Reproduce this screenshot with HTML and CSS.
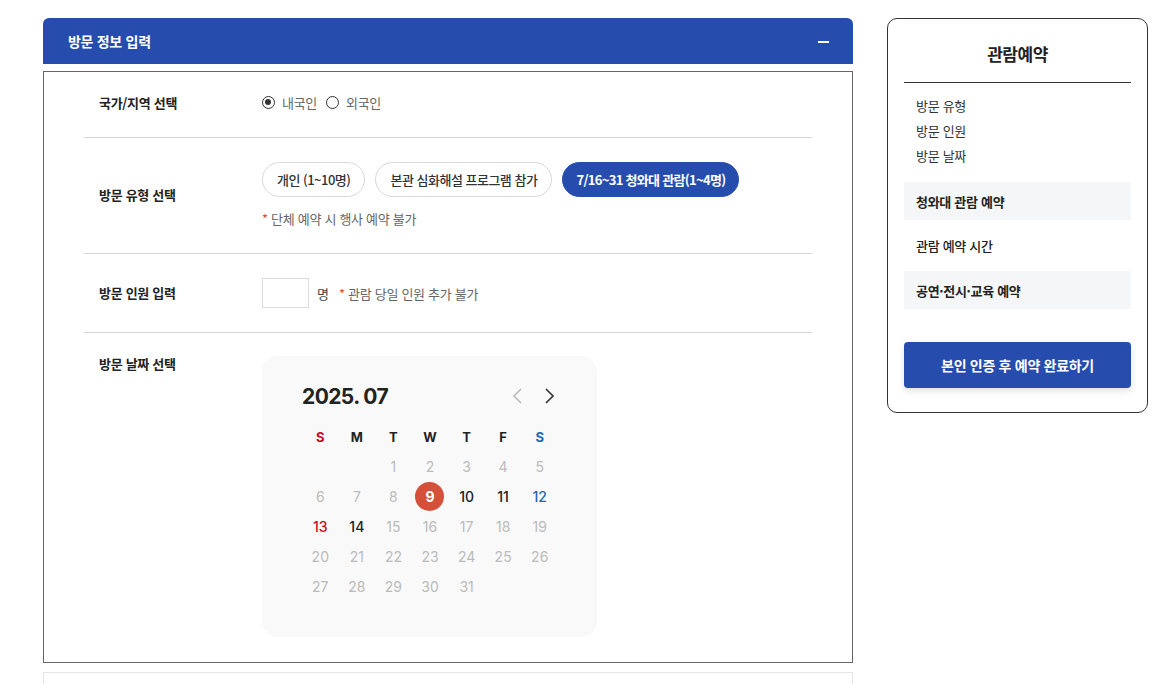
FILE: index.html
```html
<!DOCTYPE html>
<html lang="ko">
<head>
<meta charset="utf-8">
<title>관람예약</title>
<link rel="stylesheet" href="styles.css">
</head>
<body>
<div class="page">
  <main class="main">
    <div class="sec-head">
      <h2 class="sec-title">방문 정보 입력</h2>
      <span class="minus"></span>
    </div>
    <div class="panel">
      <div class="row">
        <div class="label">국가/지역 선택</div>
        <div class="value radios">
          <label class="radio"><span class="dot on"></span>내국인</label>
          <label class="radio"><span class="dot"></span>외국인</label>
        </div>
      </div>
      <div class="row row-type">
        <div class="label">방문 유형 선택</div>
        <div class="value">
          <div class="chips">
            <button class="chip">개인 (1~10명)</button>
            <button class="chip">본관 심화해설 프로그램 참가</button>
            <button class="chip active">7/16~31 청와대 관람(1~4명)</button>
          </div>
          <p class="note"><span class="ast">*</span> 단체 예약 시 행사 예약 불가</p>
        </div>
      </div>
      <div class="row row-count">
        <div class="label">방문 인원 입력</div>
        <div class="value count">
          <span class="num-input"></span>
          <span class="unit">명</span>
          <span class="note-inline"><span class="ast">*</span> 관람 당일 인원 추가 불가</span>
        </div>
      </div>
      <div class="row row-date">
        <div class="label label-top">방문 날짜 선택</div>
        <div class="value">
          <div class="cal">
            <div class="cal-head">
              <span class="cal-title">2025. 07</span>
              <div class="cal-nav">
                <svg class="arr prev" width="14" height="18" viewBox="0 0 14 18"><path d="M10 2 L3 9 L10 16" fill="none" stroke="currentColor" stroke-width="1.6"/></svg>
                <svg class="arr next" width="14" height="18" viewBox="0 0 14 18"><path d="M4 2 L11 9 L4 16" fill="none" stroke="currentColor" stroke-width="1.6"/></svg>
              </div>
            </div>
            <div class="grid">
              <span class="wd sun">S</span><span class="wd">M</span><span class="wd">T</span><span class="wd">W</span><span class="wd">T</span><span class="wd">F</span><span class="wd sat">S</span>
              <span></span><span></span><span class="d">1</span><span class="d">2</span><span class="d">3</span><span class="d">4</span><span class="d">5</span>
              <span class="d">6</span><span class="d">7</span><span class="d">8</span><span class="d today"><i>9</i></span><span class="d en">10</span><span class="d en">11</span><span class="d en sat">12</span>
              <span class="d en sun">13</span><span class="d en">14</span><span class="d">15</span><span class="d">16</span><span class="d">17</span><span class="d">18</span><span class="d">19</span>
              <span class="d">20</span><span class="d">21</span><span class="d">22</span><span class="d">23</span><span class="d">24</span><span class="d">25</span><span class="d">26</span>
              <span class="d">27</span><span class="d">28</span><span class="d">29</span><span class="d">30</span><span class="d">31</span><span></span><span></span>
            </div>
          </div>
        </div>
      </div>
    </div>
    <div class="panel2"></div>
  </main>
  <aside class="side">
    <h3 class="side-title">관람예약</h3>
    <ul class="side-list">
      <li>방문 유형</li>
      <li>방문 인원</li>
      <li>방문 날짜</li>
    </ul>
    <div class="side-box">청와대 관람 예약</div>
    <div class="side-item">관람 예약 시간</div>
    <div class="side-box">공연·전시·교육 예약</div>
    <button class="side-btn">본인 인증 후 예약 완료하기</button>
  </aside>
</div>
</body>
</html>
```

FILE: styles.css
```css
* { box-sizing: border-box; }
html, body { margin: 0; padding: 0; background: #fff; }
body {
  font-family: "Noto Sans CJK KR", "Noto Sans", sans-serif;
  color: #222;
  font-size: 13px;
  overflow: hidden;
}
.page {
  display: flex;
  align-items: flex-start;
  gap: 34px;
  padding: 18px 0 0 43px;
}
.main { width: 810px; flex: none; }
.sec-head {
  height: 46px;
  background: #264dae;
  border-radius: 6px 6px 0 0;
  display: flex;
  align-items: center;
  justify-content: space-between;
  padding: 0 24px 0 25px;
}
.sec-title {
  margin: 0;
  color: #fff;
  font-size: 14px;
  font-weight: 700;
  line-height: 20px;
  letter-spacing: -0.3px;
}
.minus {
  width: 11px;
  height: 2px;
  background: #fff;
  margin-top: 1px;
}
.panel {
  margin-top: 7px;
  border: 1px solid #666;
  padding: 0 40px;
  height: 592px;
}
.row {
  display: flex;
  align-items: center;
  padding: 23px 0 24px;
  border-bottom: 1px solid #d6d6d6;
}
.row:first-child { padding: 21px 0 25px; }
.row-type { padding: 24px 0 25px; }
.row-count { padding: 24px 0 24px; }
.row-date { border-bottom: none; align-items: flex-start; }
.label {
  width: 178px;
  flex: none;
  padding-left: 15px;
  font-weight: 700;
  font-size: 13px;
  line-height: 18px;
  letter-spacing: -0.3px;
  color: #222;
}
.label-top { margin-top: -1px; }
.value { flex: 1; }
.radios { display: flex; gap: 9px; line-height: 19px; }
.radio {
  display: flex;
  align-items: center;
  gap: 7px;
  color: #666;
  font-size: 13px;
  letter-spacing: -0.3px;
}
.dot {
  width: 13px;
  height: 13px;
  border: 1.3px solid #333;
  border-radius: 50%;
  position: relative;
}
.dot.on::after {
  content: "";
  position: absolute;
  left: 2.2px; top: 2.2px;
  width: 6px; height: 6px;
  border-radius: 50%;
  background: #333;
}
.chips { display: flex; gap: 10px; }
.chip {
  height: 35px;
  padding: 0 14px;
  border: 1px solid #d9d9d9;
  border-radius: 18px;
  background: #fff;
  font-family: inherit;
  font-size: 13px;
  font-weight: 500;
  color: #333;
  letter-spacing: -0.5px;
  cursor: pointer;
}
.chip.active {
  background: #264dae;
  border-color: #264dae;
  color: #fff;
  font-weight: 600;
  padding: 0 13px;
  letter-spacing: -0.7px;
}
.note {
  margin: 13px 0 0;
  color: #666;
  font-size: 13px;
  line-height: 18px;
  letter-spacing: -0.3px;
}
.ast { color: #d4503a; }
.count { display: flex; align-items: center; }
.num-input {
  width: 47px;
  height: 30px;
  border: 1px solid #dcdcdc;
  background: #fff;
}
.unit { margin-left: 8px; color: #444; font-size: 13px; }
.note-inline { margin-left: 10px; color: #666; font-size: 13px; letter-spacing: -0.3px; }
.cal {
  width: 335px;
  height: 281px;
  background: #f9f9f9;
  border-radius: 16px;
  padding: 26px 39px 0 40px;
  font-family: Inter, "Noto Sans", sans-serif;
}
.cal-head {
  display: flex;
  justify-content: space-between;
  align-items: center;
  height: 28px;
}
.cal-title {
  font-size: 21px;
  font-weight: 700;
  color: #222;
  letter-spacing: -0.6px;
}
.cal-nav { display: flex; gap: 17px; margin-right: 2px; }
.arr { display: block; }
.prev { color: #bbb; }
.next { color: #333; }
.grid {
  margin-top: 12px;
  display: grid;
  grid-template-columns: repeat(7, 1fr);
  grid-template-rows: 29px;
  grid-auto-rows: 30px;
  width: 256px;
}
.grid span {
  display: flex;
  align-items: center;
  justify-content: center;
  font-size: 14px;
}
.wd { font-weight: 700; color: #222; font-size: 13px !important; }
.wd.sun { color: #c0102a; }
.wd.sat { color: #1a6ab5; }
.d { color: #bbb; font-weight: 400; }
.d.en { color: #222; font-weight: 500; }
.d.en.sat { color: #1a6ab5; }
.d.en.sun { color: #c0102a; }
.d.today i {
  font-style: normal;
  width: 29px;
  height: 29px;
  border-radius: 50%;
  background: #d4503a;
  color: #fff;
  font-weight: 700;
  display: flex;
  align-items: center;
  justify-content: center;
}
.panel2 {
  margin-top: 9px;
  height: 60px;
  border: 1px solid #e6e6e6;
}
.side {
  width: 261px;
  flex: none;
  border: 1px solid #333;
  border-radius: 10px;
  padding: 0 16px 24px 16px;
}
.side-title {
  margin: 0;
  padding: 22px 0 16px;
  text-align: center;
  font-size: 17px;
  line-height: 25px;
  font-weight: 700;
  color: #222;
  letter-spacing: -0.5px;
  border-bottom: 1px solid #333;
}
.side-list {
  list-style: none;
  margin: 0;
  padding: 10px 12px 0;
}
.side-list li {
  line-height: 25px;
  font-size: 13px;
  color: #333;
  letter-spacing: -0.3px;
}
.side-box {
  margin-top: 14px;
  background: #f5f6f8;
  height: 38px;
  display: flex;
  align-items: center;
  padding: 0 12px;
  font-weight: 700;
  font-size: 13px;
  color: #222;
  letter-spacing: -0.3px;
}
.side-item + .side-box { margin-top: 0; }
.side-item {
  height: 51px;
  display: flex;
  align-items: center;
  padding: 0 12px;
  font-size: 13px;
  font-weight: 500;
  color: #222;
  letter-spacing: -0.3px;
}
.side-btn {
  margin-top: 33px;
  width: 100%;
  height: 46px;
  border: none;
  border-radius: 4px;
  background: #264dae;
  color: #fff;
  font-family: inherit;
  font-size: 14px;
  font-weight: 700;
  letter-spacing: -0.3px;
  box-shadow: 0 3px 6px rgba(0,0,0,0.12);
  cursor: pointer;
}
```
